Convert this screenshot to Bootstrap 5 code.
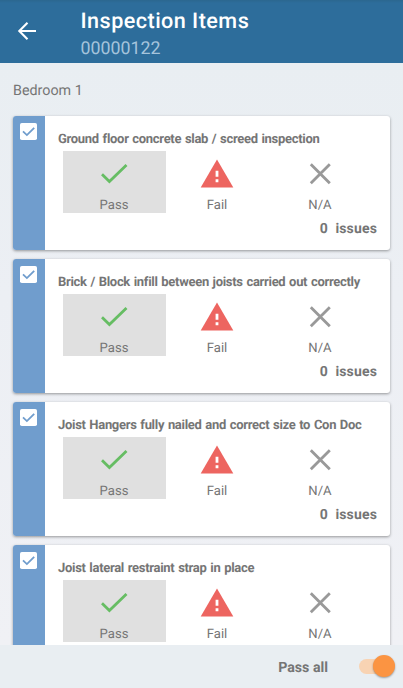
<!DOCTYPE html>
<html lang="en">
<head>
<meta charset="utf-8">
<meta name="viewport" content="width=device-width, initial-scale=1">
<title>Inspection Items</title>
<link href="https://cdn.jsdelivr.net/npm/bootstrap@5.3.0/dist/css/bootstrap.min.css" rel="stylesheet">
<style>
body{font-family:Roboto,"Liberation Sans",sans-serif;background:#edf0f4;color:#757575;text-rendering:geometricPrecision}
.app-bar{height:62.5px;background:linear-gradient(#2b678f 0,#2d6d9b 3px);padding-left:17px;color:#fff}
.back{width:20px;height:20px;margin-right:43.5px}
.app-title{font-size:21.6px;line-height:25px;font-weight:500;letter-spacing:.46px;margin-top:7px}
.app-ref{font-size:17.8px;line-height:25px;color:#a5c4dc;margin-top:2px}
.items{background:linear-gradient(#e9eef2,#eceff4 40%,#f0f1f5);padding:0 13px}
.room{font-size:14.3px;line-height:20px;padding-top:18px;height:53.5px;letter-spacing:0}
.item{height:134px;margin-bottom:9px;border-radius:3px;box-shadow:0 1px 3px rgba(0,0,0,.38)}
.side{width:31.5px;background:#709dcd;padding-top:7px;border-radius:3px 0 0 3px}
.tick{width:17px;height:17px}
.item-name{font-size:13px;line-height:18px;font-weight:700;letter-spacing:-.3px;word-spacing:.8px;padding:15px 0 0 13.5px;height:35px}
.choices{margin-left:18px;width:309px;height:62px}
.choice{width:103px;font-size:13.1px;line-height:16px}
.choice svg{width:34px;height:34px;margin-top:5.5px;margin-bottom:7.5px}
.chosen{background:#e0e0e0}
.issues{font-size:14px;line-height:18px;font-weight:700;padding:7px 13px 0 0;gap:7.5px;letter-spacing:.15px}
.bottom{height:43px;background:#e9eef2;padding-right:8px;gap:31px;font-size:14.2px;letter-spacing:0}
.bottom span{padding-top:5px}
.toggle{width:36px;height:23px}
.track{width:32px;height:15px;background:#f8d3b3}
.knob{width:22px;height:22px;background:#fb9442;right:0;top:0;box-shadow:0 1px 2px rgba(0,0,0,.35)}
</style>
<script src="https://cdn.jsdelivr.net/npm/bootstrap@5.3.0/dist/js/bootstrap.bundle.min.js"></script>
</head>
<body class="vh-100 overflow-hidden d-flex flex-column">
<svg class="d-none" xmlns="http://www.w3.org/2000/svg">
<symbol id="tick" viewBox="0 0 17 17"><rect width="17" height="17" rx="1.8" fill="#fff"/><path d="M3 8.3 6.9 12.1 14.2 4.8" fill="none" stroke="#709dcd" stroke-width="1.8"/></symbol>
<symbol id="pass" viewBox="0 0 34 34"><path d="M5 17.3 12.4 24.5 29.5 8" fill="none" stroke="#66bd63" stroke-width="2.8"/></symbol>
<symbol id="fail" viewBox="0 0 34 34"><path d="M17 2.5 33.3 30.5H.7Z" fill="#ed6560"/><path d="M15.6 13.8h2.8v6h-2.8zM15.6 22.2h2.8v3h-2.8z" fill="#fff"/></symbol>
<symbol id="na" viewBox="0 0 34 34"><path d="M7.8 7.3 26.8 26.3M26.8 7.3 7.8 26.3" fill="none" stroke="#999" stroke-width="2.8"/></symbol>
</svg>
<header class="app-bar d-flex align-items-center flex-shrink-0">
<svg class="back" viewBox="0 0 20 20" fill="none" stroke="#fff" stroke-width="2.1"><path d="M19 10H2.5M10.5 1.8 2.3 10l8.2 8.2"/></svg>
<div><h1 class="app-title mb-0">Inspection Items</h1><div class="app-ref">00000122</div></div>
</header>
<main class="items flex-grow-1 overflow-hidden">
<div class="room">Bedroom 1</div>
<section class="item d-flex bg-white">
<div class="side d-flex justify-content-center flex-shrink-0"><svg class="tick"><use href="#tick"/></svg></div>
<div class="flex-grow-1"><div class="item-name text-nowrap">Ground floor concrete slab / screed inspection</div>
<div class="choices d-flex text-center"><div class="choice chosen"><svg class="d-block mx-auto"><use href="#pass"/></svg>Pass</div><div class="choice"><svg class="d-block mx-auto"><use href="#fail"/></svg>Fail</div><div class="choice"><svg class="d-block mx-auto"><use href="#na"/></svg>N/A</div></div>
<div class="issues d-flex justify-content-end"><span>0</span><span>issues</span></div></div>
</section>
<section class="item d-flex bg-white">
<div class="side d-flex justify-content-center flex-shrink-0"><svg class="tick"><use href="#tick"/></svg></div>
<div class="flex-grow-1"><div class="item-name text-nowrap">Brick / Block infill between joists carried out correctly</div>
<div class="choices d-flex text-center"><div class="choice chosen"><svg class="d-block mx-auto"><use href="#pass"/></svg>Pass</div><div class="choice"><svg class="d-block mx-auto"><use href="#fail"/></svg>Fail</div><div class="choice"><svg class="d-block mx-auto"><use href="#na"/></svg>N/A</div></div>
<div class="issues d-flex justify-content-end"><span>0</span><span>issues</span></div></div>
</section>
<section class="item d-flex bg-white">
<div class="side d-flex justify-content-center flex-shrink-0"><svg class="tick"><use href="#tick"/></svg></div>
<div class="flex-grow-1"><div class="item-name text-nowrap">Joist Hangers fully nailed and correct size to Con Doc</div>
<div class="choices d-flex text-center"><div class="choice chosen"><svg class="d-block mx-auto"><use href="#pass"/></svg>Pass</div><div class="choice"><svg class="d-block mx-auto"><use href="#fail"/></svg>Fail</div><div class="choice"><svg class="d-block mx-auto"><use href="#na"/></svg>N/A</div></div>
<div class="issues d-flex justify-content-end"><span>0</span><span>issues</span></div></div>
</section>
<section class="item d-flex bg-white">
<div class="side d-flex justify-content-center flex-shrink-0"><svg class="tick"><use href="#tick"/></svg></div>
<div class="flex-grow-1"><div class="item-name text-nowrap">Joist lateral restraint strap in place</div>
<div class="choices d-flex text-center"><div class="choice chosen"><svg class="d-block mx-auto"><use href="#pass"/></svg>Pass</div><div class="choice"><svg class="d-block mx-auto"><use href="#fail"/></svg>Fail</div><div class="choice"><svg class="d-block mx-auto"><use href="#na"/></svg>N/A</div></div></div>
</section>
</main>
<footer class="bottom d-flex align-items-center justify-content-end flex-shrink-0 fw-bold"><span>Pass all</span>
<div class="toggle position-relative d-flex align-items-center"><div class="track rounded-pill"></div><div class="knob position-absolute rounded-circle"></div></div>
</footer>
</body>
</html>
